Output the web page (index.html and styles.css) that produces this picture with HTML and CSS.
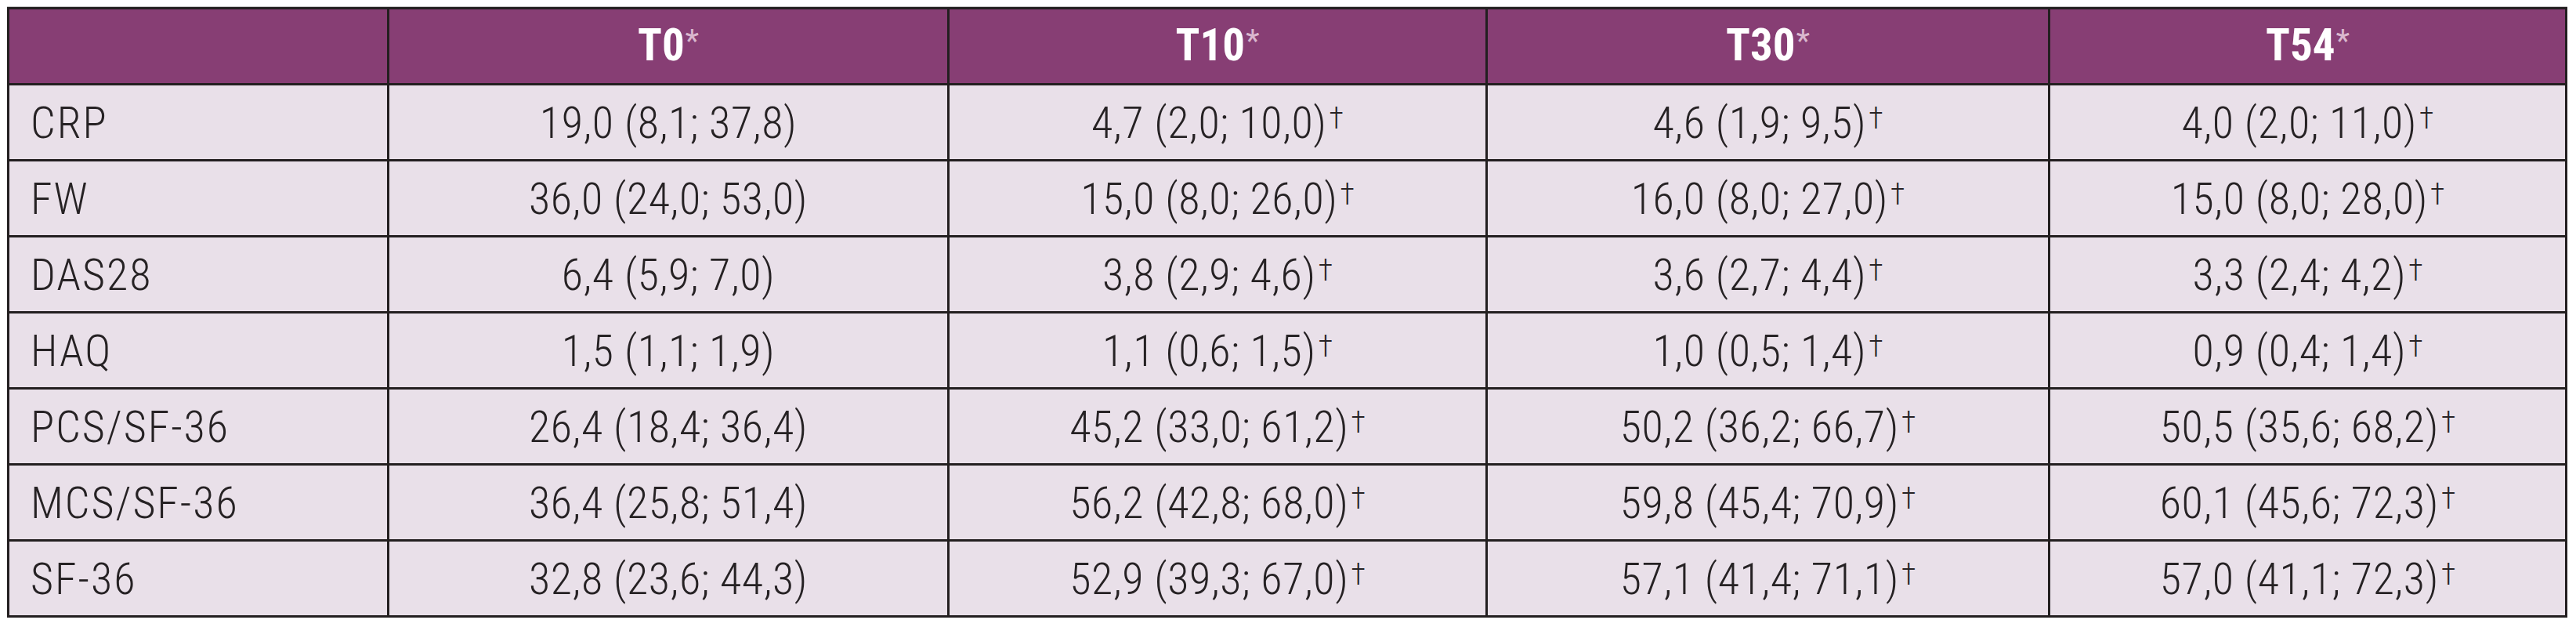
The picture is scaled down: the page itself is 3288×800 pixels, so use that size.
FILE: index.html
```html
<!DOCTYPE html>
<html lang="nl">
<head>
<meta charset="utf-8">
<title>Table</title>
<link rel="stylesheet" href="styles.css">
</head>
<body>
<div class="page">
  <div class="table" role="table">
    <div class="cell head label" role="columnheader"></div>
    <div class="cell head" role="columnheader">T0<span class="ast">*</span></div>
    <div class="cell head" role="columnheader">T10<span class="ast">*</span></div>
    <div class="cell head" role="columnheader">T30<span class="ast">*</span></div>
    <div class="cell head" role="columnheader">T54<span class="ast">*</span></div>

    <div class="cell label">CRP</div>
    <div class="cell">19,0 (8,1; 37,8)</div>
    <div class="cell">4,7 (2,0; 10,0)<span class="dag">†</span></div>
    <div class="cell">4,6 (1,9; 9,5)<span class="dag">†</span></div>
    <div class="cell">4,0 (2,0; 11,0)<span class="dag">†</span></div>

    <div class="cell label">FW</div>
    <div class="cell">36,0 (24,0; 53,0)</div>
    <div class="cell">15,0 (8,0; 26,0)<span class="dag">†</span></div>
    <div class="cell">16,0 (8,0; 27,0)<span class="dag">†</span></div>
    <div class="cell">15,0 (8,0; 28,0)<span class="dag">†</span></div>

    <div class="cell label">DAS28</div>
    <div class="cell">6,4 (5,9; 7,0)</div>
    <div class="cell">3,8 (2,9; 4,6)<span class="dag">†</span></div>
    <div class="cell">3,6 (2,7; 4,4)<span class="dag">†</span></div>
    <div class="cell">3,3 (2,4; 4,2)<span class="dag">†</span></div>

    <div class="cell label">HAQ</div>
    <div class="cell">1,5 (1,1; 1,9)</div>
    <div class="cell">1,1 (0,6; 1,5)<span class="dag">†</span></div>
    <div class="cell">1,0 (0,5; 1,4)<span class="dag">†</span></div>
    <div class="cell">0,9 (0,4; 1,4)<span class="dag">†</span></div>

    <div class="cell label">PCS/SF-36</div>
    <div class="cell">26,4 (18,4; 36,4)</div>
    <div class="cell">45,2 (33,0; 61,2)<span class="dag">†</span></div>
    <div class="cell">50,2 (36,2; 66,7)<span class="dag">†</span></div>
    <div class="cell">50,5 (35,6; 68,2)<span class="dag">†</span></div>

    <div class="cell label">MCS/SF-36</div>
    <div class="cell">36,4 (25,8; 51,4)</div>
    <div class="cell">56,2 (42,8; 68,0)<span class="dag">†</span></div>
    <div class="cell">59,8 (45,4; 70,9)<span class="dag">†</span></div>
    <div class="cell">60,1 (45,6; 72,3)<span class="dag">†</span></div>

    <div class="cell label">SF-36</div>
    <div class="cell">32,8 (23,6; 44,3)</div>
    <div class="cell">52,9 (39,3; 67,0)<span class="dag">†</span></div>
    <div class="cell">57,1 (41,4; 71,1)<span class="dag">†</span></div>
    <div class="cell">57,0 (41,1; 72,3)<span class="dag">†</span></div>
  </div>
</div>
</body>
</html>
```

FILE: styles.css
```css
html, body {
  margin: 0;
  padding: 0;
  background: #ffffff;
}

.page {
  padding: 9px 0 0 9px;
}

.table {
  display: grid;
  grid-template-columns: 482px 712px 684px 715px 657px;
  grid-auto-rows: 94px;
  gap: 3px;
  padding: 3px;
  width: max-content;
  background: #231f20;
  box-shadow: 0 -1px 0 #c4c4c4;
  font-family: "Roboto Condensed", "DejaVu Sans Condensed", "Liberation Sans", Arial, sans-serif;
  font-weight: 300;
  font-size: 56px;
  letter-spacing: 0.6px;
  color: #262224;
}

.cell {
  box-sizing: border-box;
  padding-top: 3px;
  line-height: 91px;
  text-align: center;
  background: #e9e0e9;
  white-space: nowrap;
  overflow: hidden;
}

.cell.label {
  text-align: left;
  padding-left: 27px;
  letter-spacing: 2px;
}

.cell.head {
  background: #873e74;
  color: #ffffff;
  font-weight: bold;
  font-size: 57px;
  letter-spacing: 0;
  padding-top: 0;
}

.ast {
  font-size: 40px;
  font-weight: normal;
  line-height: 0;
  vertical-align: 11px;
  color: rgba(255, 238, 248, 0.7);
  margin-left: 1px;
}

.dag {
  font-size: 38px;
  line-height: 0;
  vertical-align: 12px;
  margin-left: 3px;
  letter-spacing: 0;
}
```
